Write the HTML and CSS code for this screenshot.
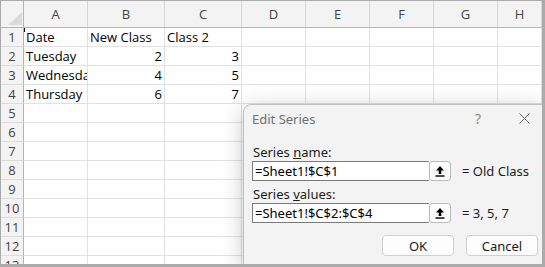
FILE: index.html
```html
<!DOCTYPE html>
<html lang="en">
<head>
    <meta charset="UTF-8">
    <title>Edit Series</title>
    <link rel="stylesheet" href="styles.css">
</head>
<body>
    <div class="frame">
        <div class="sheet">
            <div class="row head">
                <div class="corner"><span class="corner-tri"></span></div>
                <div>A</div><div>B</div><div>C</div><div>D</div><div>E</div><div>F</div><div>G</div><div>H</div>
            </div>
            <div class="row">
                <div>1</div><div class="active">Date</div><div>New Class</div><div>Class 2</div><div></div><div></div><div></div><div></div><div></div>
            </div>
            <div class="row">
                <div>2</div><div>Tuesday</div><div class="num">2</div><div class="num">3</div><div></div><div></div><div></div><div></div><div></div>
            </div>
            <div class="row">
                <div>3</div><div>Wednesday</div><div class="num">4</div><div class="num">5</div><div></div><div></div><div></div><div></div><div></div>
            </div>
            <div class="row">
                <div>4</div><div>Thursday</div><div class="num">6</div><div class="num">7</div><div></div><div></div><div></div><div></div><div></div>
            </div>
            <div class="row"><div>5</div><div></div><div></div><div></div><div></div><div></div><div></div><div></div><div></div></div>
            <div class="row"><div>6</div><div></div><div></div><div></div><div></div><div></div><div></div><div></div><div></div></div>
            <div class="row"><div>7</div><div></div><div></div><div></div><div></div><div></div><div></div><div></div><div></div></div>
            <div class="row"><div>8</div><div></div><div></div><div></div><div></div><div></div><div></div><div></div><div></div></div>
            <div class="row"><div>9</div><div></div><div></div><div></div><div></div><div></div><div></div><div></div><div></div></div>
            <div class="row"><div>10</div><div></div><div></div><div></div><div></div><div></div><div></div><div></div><div></div></div>
            <div class="row"><div>11</div><div></div><div></div><div></div><div></div><div></div><div></div><div></div><div></div></div>
            <div class="row"><div>12</div><div></div><div></div><div></div><div></div><div></div><div></div><div></div><div></div></div>
            <div class="row"><div>13</div><div></div><div></div><div></div><div></div><div></div><div></div><div></div><div></div></div>
        </div>

        <div class="dialog">
            <div class="dialog-title">
                <span class="title-text">Edit Series</span>
                <span class="title-btn">?</span>
                <span class="title-btn">
                    <svg width="11" height="11" viewBox="0 0 11 11"><path d="M0.5 0.5 L10.5 10.5 M10.5 0.5 L0.5 10.5" stroke="#6b6b6b" stroke-width="1" fill="none"/></svg>
                </span>
            </div>
            <div class="dialog-body">
                <div class="field-label">Series <u>n</u>ame:</div>
                <div class="field-row">
                    <div class="ref-box">
                        <div class="ref-input">=Sheet1!$C$1</div>
                        <div class="ref-btn">
                            <svg width="10" height="12" viewBox="0 0 10 12"><path d="M5 1 L9 5.5 H6.3 V9 H3.7 V5.5 H1 Z" fill="#000"/><rect x="0.5" y="10.3" width="9" height="1.4" fill="#000"/></svg>
                        </div>
                    </div>
                    <span class="field-value">= Old Class</span>
                </div>
                <div class="field-label second">Series <u>v</u>alues:</div>
                <div class="field-row">
                    <div class="ref-box">
                        <div class="ref-input">=Sheet1!$C$2:$C$4</div>
                        <div class="ref-btn">
                            <svg width="10" height="12" viewBox="0 0 10 12"><path d="M5 1 L9 5.5 H6.3 V9 H3.7 V5.5 H1 Z" fill="#000"/><rect x="0.5" y="10.3" width="9" height="1.4" fill="#000"/></svg>
                        </div>
                    </div>
                    <span class="field-value">= 3, 5, 7</span>
                </div>
                <div class="btn-row">
                    <button class="dlg-btn">OK</button>
                    <button class="dlg-btn">Cancel</button>
                </div>
            </div>
        </div>
    </div>
</body>
</html>
```

FILE: styles.css
```css
* {
    margin: 0;
    padding: 0;
    box-sizing: border-box;
}

body {
    background: #fff;
    font-family: 'Open Sans', 'Noto Sans', sans-serif;
    font-size: 13px;
    color: #000;
}

.frame {
    position: relative;
    width: 545px;
    height: 267px;
    border-style: solid;
    border-color: #ababab;
    border-width: 1px 3px 3px 1px;
    overflow: hidden;
    background: #fff;
}

/* spreadsheet grid */

.sheet {
    display: flex;
    flex-direction: column;
}

.row {
    display: grid;
    grid-template-columns: 23px 64px 77px 77px 64px 64px 64px 64px 1fr;
    height: 19px;
    flex-shrink: 0;
}

.row > div {
    border-right: 1px solid #e1e1e1;
    border-bottom: 1px solid #e1e1e1;
    padding: 0 2px;
    line-height: 18px;
    white-space: nowrap;
    overflow: hidden;
}

.row > div:first-child {
    background: #f3f3f3;
    border-right-color: #b4b4b4;
    border-bottom-color: #dcdcdc;
    color: #444;
    text-align: center;
    padding: 0;
}

.row.head {
    height: 27px;
}

.row.head > div {
    background: #f3f3f3;
    border-bottom: 1px solid #b4b4b4;
    border-right-color: #d6d6d6;
    color: #444;
    text-align: center;
    line-height: 26px;
}

.row.head > div.corner {
    position: relative;
    border-right-color: #b4b4b4;
    border-bottom-color: #b4b4b4;
}

.corner-tri {
    position: absolute;
    right: 1px;
    bottom: 2px;
    width: 0;
    height: 0;
    border-left: 14px solid transparent;
    border-bottom: 13px solid #dadada;
}

.num {
    text-align: right;
}

.active {
    position: relative;
}

.active::before {
    content: '';
    position: absolute;
    left: 0;
    top: 0;
    width: 1px;
    height: 4px;
    background: #000;
}

/* dialog */

.dialog {
    position: absolute;
    left: 242px;
    top: 103px;
    width: 305px;
    height: 165px;
    background: #f3f3f3;
    border: 1px solid #c2c2c2;
    border-radius: 8px 8px 0 0;
    box-shadow: 0 4px 22px rgba(0, 0, 0, 0.22);
    font-family: 'Noto Sans', 'Open Sans', sans-serif;
}

.dialog-title {
    display: flex;
    align-items: center;
    height: 27px;
    padding-left: 8px;
}

.title-text {
    flex: 1;
    color: #6f6f6f;
}

.title-btn {
    width: 46px;
    display: flex;
    justify-content: center;
    align-items: center;
    color: #8a8a8a;
    font-size: 14px;
}

.dialog-body {
    padding: 11px 9px 0 8px;
}

.field-label {
    line-height: 18px;
    padding-left: 1px;
    color: #1b1b1b;
}

.field-label.second {
    margin-top: 4px;
}

.field-row {
    display: flex;
    align-items: center;
}

.ref-box {
    display: flex;
    width: 199px;
    height: 20px;
}

.ref-input {
    flex: 1;
    background: #fff;
    border: 1px solid #7a7a7a;
    border-right: none;
    padding-left: 2px;
    line-height: 18px;
    white-space: nowrap;
}

.ref-btn {
    width: 22px;
    display: flex;
    justify-content: center;
    align-items: center;
    background: #fcfcfc;
    border: 1px solid #b9b9b9;
    border-radius: 3px;
}

.field-value {
    margin-left: 11px;
    color: #1b1b1b;
}

.btn-row {
    display: flex;
    justify-content: flex-end;
    gap: 12px;
    margin-top: 12px;
}

.dlg-btn {
    width: 72px;
    height: 21px;
    background: #fdfdfd;
    border: 1px solid #d0d0d0;
    border-radius: 4px;
    font-family: inherit;
    font-size: 13px;
    color: #1b1b1b;
}
```
